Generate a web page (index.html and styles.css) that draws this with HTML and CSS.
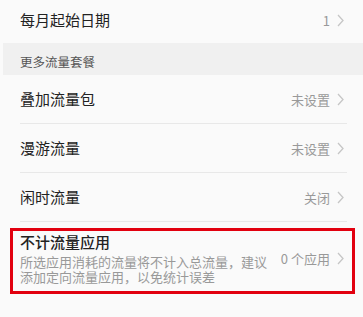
FILE: index.html
```html
<!DOCTYPE html>
<html lang="zh-CN">
<head>
  <meta charset="UTF-8" />
  <meta name="viewport" content="width=device-width, initial-scale=1" />
  <title>流量设置</title>
  <link rel="stylesheet" href="styles.css">
</head>
<body>

<div class="row row-first">
  <span class="label">每月起始日期</span>
  <span class="value">1 <svg class="chevron" width="7" height="13" viewBox="0 0 7 13"><polyline points="1,1 6,6.5 1,12" /></svg></span>
</div>

<div class="section-title">更多流量套餐</div>

<div class="row">
  <span class="label">叠加流量包</span>
  <span class="value">未设置 <svg class="chevron" width="7" height="13" viewBox="0 0 7 13"><polyline points="1,1 6,6.5 1,12" /></svg></span>
</div>
<div class="row">
  <span class="label">漫游流量</span>
  <span class="value">未设置 <svg class="chevron" width="7" height="13" viewBox="0 0 7 13"><polyline points="1,1 6,6.5 1,12" /></svg></span>
</div>
<div class="row">
  <span class="label">闲时流量</span>
  <span class="value">关闭 <svg class="chevron" width="7" height="13" viewBox="0 0 7 13"><polyline points="1,1 6,6.5 1,12" /></svg></span>
</div>

<div class="row row-tall highlight">
  <div class="text-block">
    <div class="label label-strong">不计流量应用</div>
    <div class="desc">所选应用消耗的流量将不计入总流量，建议添加定向流量应用，以免统计误差</div>
  </div>
  <span class="value">0 个应用 <svg class="chevron" width="7" height="13" viewBox="0 0 7 13"><polyline points="1,1 6,6.5 1,12" /></svg></span>
</div>

</body>
</html>
```

FILE: styles.css
```css
body {
  margin: 0;
  background: #fafafa;
  font-family: "Noto Sans CJK SC", "Noto Sans", sans-serif;
  color: #222;
}
.row {
  display: flex;
  align-items: center;
  justify-content: space-between;
  box-sizing: border-box;
  height: 49px;
  margin: 0 16px 0 20px;
  border-bottom: 1px solid #e8e8e8;
}
.row-first {
  height: 43px;
  padding-bottom: 3px;
  border-bottom: none;
}
.label {
  font-size: 15px;
  line-height: 20px;
}
.label-strong {
  font-weight: 500;
}
.value {
  display: flex;
  align-items: center;
  gap: 7px;
  padding-right: 3px;
  font-size: 13px;
  color: #999;
  white-space: nowrap;
}
.chevron {
  fill: none;
  stroke: #c6c6c6;
  stroke-width: 1.3;
}
.section-title {
  box-sizing: border-box;
  height: 32px;
  margin-left: 3px;
  padding: 11px 0 0 17px;
  background: #f0f0f0;
  font-size: 12.5px;
  line-height: 16px;
  color: #555;
}
.row-tall {
  height: auto;
  padding: 10px 0 10px;
  border-bottom: none;
  position: relative;
}
.text-block {
  width: 248px;
}
.desc {
  margin-top: 2px;
  font-size: 13px;
  line-height: 15px;
  color: #999;
}
.highlight::after {
  content: "";
  position: absolute;
  left: -10px;
  right: -8px;
  top: 6px;
  bottom: 0;
  border: 3px solid #e2000f;
}
```
